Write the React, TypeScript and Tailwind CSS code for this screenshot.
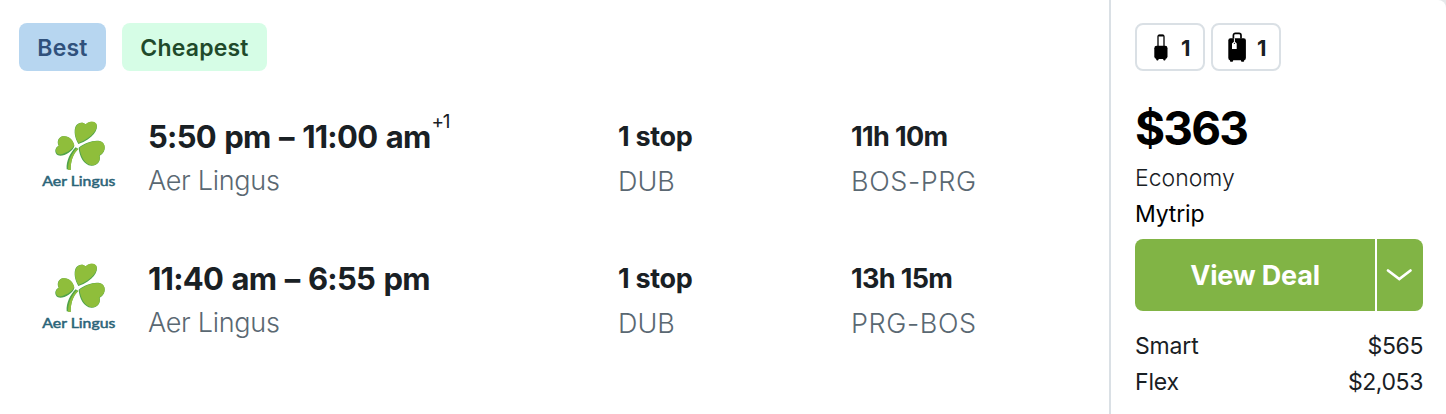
type Leg = {
  times: string;
  dayOffset?: string;
  airline: string;
  stops: string;
  via: string;
  duration: string;
  route: string;
};

const legs: Leg[] = [
  {
    times: "5:50 pm – 11:00 am",
    dayOffset: "+1",
    airline: "Aer Lingus",
    stops: "1 stop",
    via: "DUB",
    duration: "11h 10m",
    route: "BOS-PRG",
  },
  {
    times: "11:40 am – 6:55 pm",
    airline: "Aer Lingus",
    stops: "1 stop",
    via: "DUB",
    duration: "13h 15m",
    route: "PRG-BOS",
  },
];

const fares = [
  { name: "Smart", price: "$565" },
  { name: "Flex", price: "$2,053" },
];

function AerLingusLogo() {
  return (
    <svg width="78" height="74" viewBox="30 24 234 222" aria-label="Aer Lingus">
      <g fill="#4fa34a">
        <path d="M145 102C134 84 131 62 137 49C143 37 158 35 167 43C177 34 192 33 199 42C207 56 189 88 145 102Z" />
        <path d="M133 108C128 126 98 142 84 136C73 130 73 113 86 107C80 97 84 82 98 79C116 76 130 90 133 108Z" />
        <path d="M146 113C165 98 200 86 216 96C230 106 225 130 209 137C213 151 203 168 184 167C161 165 148 138 146 113Z" />
        <path d="M137 112C121 127 108 153 110 178L122 180C122 154 129 131 145 117Z" />
      </g>
      <g fill="#8fbe3b">
        <path d="M146 99C135 82 132 62 138 50C144 38 158 34 167 43C177 33 192 32 199 41C206 55 187 82 146 99Z" />
        <path d="M133 106C127 120 99 136 85 133C75 127 75 113 87 107C81 97 85 82 98 79C116 76 130 90 133 106Z" />
        <path d="M149 113C167 99 200 87 216 96C230 106 225 129 208 136C213 150 203 167 186 166C165 164 151 138 149 113Z" />
        <path d="M140 115C125 130 114 153 114 179L122 180C122 154 129 131 145 117Z" />
      </g>
      <text
        x="37"
        y="227"
        textLength="219"
        lengthAdjust="spacingAndGlyphs"
        fill="#2b6478"
        stroke="#2b6478"
        strokeWidth="1.5"
        className="font-[Lato,sans-serif] text-[41px] font-normal"
      >
        Aer Lingus
      </text>
    </svg>
  );
}

function CarryOnIcon() {
  return (
    <svg width="14" height="27" viewBox="0 0 14 27" aria-hidden="true">
      <path d="M4 12V2.6C4 1.6 4.6 1.2 5.4 1.2H8.6C9.4 1.2 10 1.6 10 2.6V12" fill="none" stroke="#000" strokeWidth="1.3" />
      <path d="M4.4 1.6H9.6" stroke="#000" strokeWidth="1.8" />
      <rect x="0.3" y="11.8" width="13.2" height="13.2" rx="2.4" />
      <rect x="2.2" y="23.8" width="2.4" height="2.6" rx="0.8" />
      <rect x="9.2" y="23.8" width="2.4" height="2.6" rx="0.8" />
    </svg>
  );
}

function CheckedBagIcon() {
  return (
    <svg width="18" height="30" viewBox="0 0 18 30" aria-hidden="true">
      <path d="M5.4 6.5V3.4C5.4 2 6.3 1.4 7.4 1.4H11C12.1 1.4 13 2 13 3.4V6.5" fill="none" stroke="#000" strokeWidth="1.7" />
      <rect x="0.3" y="6.3" width="17.6" height="22" rx="2.2" />
      <rect x="1.9" y="27" width="3.2" height="2.7" rx="0.9" />
      <rect x="13" y="27" width="3.2" height="2.7" rx="0.9" />
      <path d="M5.9 6.3H6.9V9.8L8.7 11.4V17H4V11.4L5.9 9.8Z" fill="#fff" />
      <circle cx="6.4" cy="11.3" r="0.6" />
    </svg>
  );
}

function LegRow({ leg }: { leg: Leg }) {
  return (
    <li className="flex h-[74px] text-[#192024]">
      <div className="w-[108px] shrink-0">
        <AerLingusLogo />
      </div>
      <div className="w-[470px] shrink-0">
        <p className="mt-px flex h-9 items-center text-[31px] font-bold whitespace-nowrap">
          <span className="tracking-[-0.75px] [word-spacing:1.8px]">{leg.times}</span>
          {leg.dayOffset && (
            <sup className="-top-4 ml-px text-[19px] leading-none font-normal tracking-[-1.2px]">{leg.dayOffset}</sup>
          )}
        </p>
        <p className="mt-2 flex h-9 items-center text-[27px] font-light tracking-[-0.3px] text-[#5a6872]">
          {leg.airline}
        </p>
      </div>
      <div className="w-[233px] shrink-0">
        <p className="mt-px flex h-9 items-center text-[27px] font-bold tracking-[-0.3px]">{leg.stops}</p>
        <p className="mt-[9px] flex h-9 items-center text-[27px] font-light text-[#5a6872]">{leg.via}</p>
      </div>
      <div>
        <p className="mt-px flex h-9 items-center text-[27px] font-bold tracking-[-0.65px]">{leg.duration}</p>
        <p className="mt-[9px] flex h-9 items-center text-[27px] font-light tracking-[0.6px] text-[#5a6872]">
          {leg.route}
        </p>
      </div>
    </li>
  );
}

export default function App() {
  return (
    <div className="bg-[#e6e8ea]">
      <article className="flex h-[414px] w-[1446px] overflow-hidden rounded-tr-[8px] bg-white font-[Inter,sans-serif]">
        <section className="w-[1109px] shrink-0 pt-[23px] pl-[19px]">
          <div className="flex gap-4 text-[23px] font-semibold">
            <span className="flex h-12 w-[87px] items-center justify-center rounded-lg bg-[#b7d6f0] pt-0.5 tracking-[0.2px] text-[#30517c]">
              Best
            </span>
            <span className="flex h-12 w-[145px] items-center justify-center rounded-lg bg-[#d6fde6] pt-0.5 tracking-[0.2px] text-[#1f4a2b]">
              Cheapest
            </span>
          </div>
          <ul className="mt-[47px] flex flex-col gap-[68px] pl-[21px]">
            {legs.map((leg) => (
              <LegRow key={leg.route} leg={leg} />
            ))}
          </ul>
        </section>

        <aside className="flex-1 border-l-2 border-[#dae0e5] pt-[23px] pr-[23px] pl-6 text-[#192024]">
          <div className="flex gap-1.5 text-[22px] font-bold">
            <div className="flex h-12 w-[70px] items-center rounded-lg border-2 border-[#dae0e5] pl-[17px]">
              <CarryOnIcon />
              <span className="ml-[13px] pt-0.5">1</span>
            </div>
            <div className="flex h-12 w-[70px] items-center rounded-lg border-2 border-[#dae0e5] pl-[15px]">
              <CheckedBagIcon />
              <span className="ml-[11px] pt-0.5">1</span>
            </div>
          </div>

          <p className="mt-[29px] flex h-14 items-center text-[46px] font-bold tracking-[-1.8px] text-black">$363</p>
          <p className="mt-1 flex h-9 items-center text-[23px] font-light">Economy</p>
          <p className="flex h-9 items-center text-[23px] tracking-[-0.15px] text-black">Mytrip</p>

          <div className="mt-[7px] flex h-[72px] gap-0.5 text-white">
            <button className="w-60 rounded-l-lg bg-[#81b445] pt-0.5 text-[27px] font-bold tracking-[-0.2px]">
              View Deal
            </button>
            <button className="flex w-[46px] items-center rounded-r-lg bg-[#81b445] pl-2" aria-label="More fares">
              <svg width="28" height="16" viewBox="0 0 28 16" fill="none" stroke="currentColor" strokeWidth="2.7" strokeLinecap="round">
                <path d="M3 3.5L14.3 12L25.5 3.5" />
              </svg>
            </button>
          </div>

          <dl className="mt-[17px] text-[23px]">
            {fares.map((fare) => (
              <div key={fare.name} className="flex h-9 items-center justify-between">
                <dt className="tracking-[-0.15px]">{fare.name}</dt>
                <dd className="tracking-[-0.4px]">{fare.price}</dd>
              </div>
            ))}
          </dl>
        </aside>
      </article>
    </div>
  );
}
